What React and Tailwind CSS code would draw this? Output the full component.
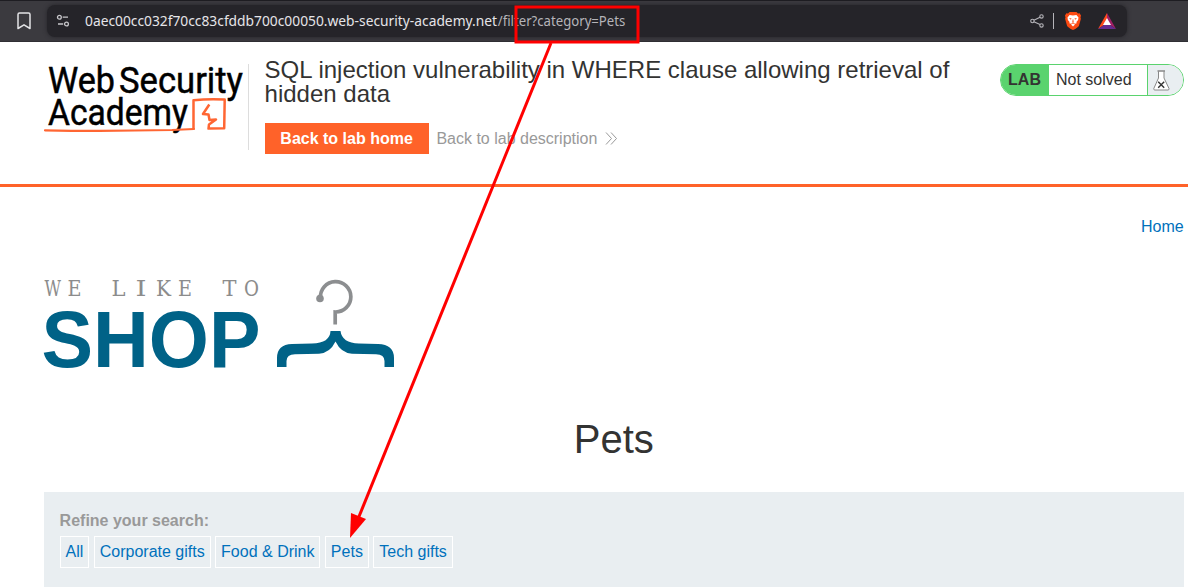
import React from "react";

const categories = ["All", "Corporate gifts", "Food & Drink", "Pets", "Tech gifts"];

const tagline = [
  ["W", 0.5, 16.5],
  ["E", 23.5, 14],
  ["L", 67.5, 14],
  ["I", 91.5, 11],
  ["K", 112, 15],
  ["E", 134, 14],
  ["T", 178.5, 14],
  ["O", 200, 15],
];

function BrowserBar() {
  return (
    <div className="flex h-[42px] items-start border-t border-[#1e1d22] bg-[#3b3a3f] pt-[4px] shadow-[inset_0_-1px_0_#302f34]">
      <svg className="mt-[7px] ml-[17px] h-[18px] w-[14px]" viewBox="0 0 14 18" fill="none" stroke="#e3e3e6" strokeWidth="1.5" strokeLinejoin="round">
        <path d="M1 2.5Q1 1 2.5 1h9Q13 1 13 2.5V16.5L7 12.8 1 16.5Z" />
      </svg>
      <div className="ml-[16px] flex h-[32px] w-[1080px] items-center rounded-[8px] bg-[#252429] shadow-[0_0_4px_#252429]">
        <svg className="ml-[9px] h-[14px] w-[14px]" viewBox="0 0 14 14" fill="none" stroke="#c7c6ca" strokeWidth="1.3">
          <circle cx="3.4" cy="3.2" r="1.9" />
          <path d="M6.7 3.2H12M2 10h5.2" />
          <circle cx="10.5" cy="10" r="1.9" />
        </svg>
        <svg className="ml-[15px] h-[24px] w-[545px]" viewBox="0 0 545 24" fontFamily="'Noto Sans', sans-serif" fontSize="14.3">
          <text x="0" y="17" textLength="412" lengthAdjust="spacingAndGlyphs" fill="#e5e4e8">0aec00cc032f70cc83cfddb700c00050.web-security-academy.net</text>
          <text x="412.8" y="17" textLength="127.5" lengthAdjust="spacingAndGlyphs" fill="#b5b4b9">/filter?category=Pets</text>
        </svg>
        <svg className="ml-auto h-[14px] w-[14px]" viewBox="0 0 14 14" fill="none" stroke="#b5b4b9" strokeWidth="1.1">
          <circle cx="2.4" cy="7" r="1.7" />
          <circle cx="11.5" cy="2.4" r="1.7" />
          <circle cx="11.5" cy="11.4" r="1.7" />
          <path d="M3.9 6.2 10 3.2M3.9 7.8 10 10.6" />
        </svg>
        <div className="ml-[9px] h-[16px] w-px bg-[#b5b4b9]" />
        <svg className="ml-[11px] h-[18px] w-[16px]" viewBox="0 0 16 18">
          <path d="M4.5 0h7l1.5 1.5 1.6-.2L16 3.5l-.5 2 .4 1.2-2 7.2Q13 15.5 8 18 3 15.5 2.1 13.9L.1 6.7.5 5.5 0 3.5 1.4 1.3 3 1.5Z" fill="#fb4a12" />
          <path d="M4.6 3 8 3.5l3.4-.5L13.5 5.6l-.4 2.3-1.7 2 .3 1.3-1.7.5L8 10.7l-2 1-1.700-.5.3-1.3-1.7-2-.4-2.3ZM8 11.4l2 1L8 14.5l-2-2.1Z" fill="#fff" />
          <path d="M4 6l2.600.5-.8 1.300ZM12 6l-2.600.5.8 1.300ZM7.500 7.500h1L8.400 9.500l.8.600L8 10.700l-1.200-.6.8-.6Z" fill="#fb4a12" />
        </svg>
        <svg className="mr-[11px] ml-[17px] h-[16px] w-[18px]" viewBox="0 0 18 16">
          <path d="M9 0 0 16 9 10Z" fill="#ff4a1c" />
          <path d="M9 0 18 16 9 10Z" fill="#a11f66" />
          <path d="M0 16h18L9 10Z" fill="#662d91" />
          <path d="M9 5 13 12H5Z" fill="#fff" />
        </svg>
      </div>
    </div>
  );
}

function AcademyLogo() {
  return (
    <svg className="h-[86px] w-[204px] shrink-0 overflow-visible" viewBox="0 0 204 86" fill="none">
      <g fill="#000" stroke="#000" strokeWidth=".5" fontFamily="Roboto, sans-serif" fontSize="37.5">
        <text x="4" y="29" textLength="67" lengthAdjust="spacingAndGlyphs">Web</text>
        <text x="75" y="29" textLength="124" lengthAdjust="spacingAndGlyphs">Security</text>
        <text x="4" y="61" textLength="140" lengthAdjust="spacingAndGlyphs">Academy</text>
      </g>
      <path d="M1 66.300Q60 67.500 128 66L150 65" stroke="#ff6633" strokeWidth="2.200" strokeLinecap="round" />
      <path d="M149.500 65V36.200Q165 34.500 180.700 35.500L180.200 64.200 164.500 64.600 165 60.500 172 55.500 165.500 56 164.500 50.500 159 50 165.300 40.500" stroke="#ff6633" strokeWidth="2.500" strokeLinejoin="round" />
    </svg>
  );
}

function LabStatus() {
  return (
    <div className="mt-[6px] flex h-[32px] w-[184px] overflow-hidden rounded-full border border-[#5ad36e] bg-white">
      <div className="flex w-[48px] items-center justify-center bg-[#5ad36e] pr-px font-bold text-[#333332]">LAB</div>
      <div className="w-[99px] border-r border-[#5ad36e] pl-[7px] leading-[30px] text-[#333332]">Not solved</div>
      <div className="flex flex-1 items-center bg-[#e9eef1] pl-[5px]">
        <svg className="h-[21px] w-[17px]" viewBox="0 0 17 21" fill="none">
          <path d="M5.500 1.200V8L.8 18.500Q.6 20 1.800 20H15Q16.300 20 16 18.500L11 8V1.200" fill="#fff" stroke="#888" />
          <path d="M4.500 1h7.500" stroke="#888" strokeWidth="1.300" />
          <path d="m5.200 11.800 6 6m0-6-6 6" stroke="#333332" strokeWidth="1.400" />
        </svg>
      </div>
    </div>
  );
}

function ShopLogo() {
  return (
    <svg className="ml-[44px] block h-[100px] w-[360px] overflow-visible" viewBox="0 0 360 100">
      <g fontFamily="'DejaVu Serif', serif" fontSize="21.500" fill="#8c8c8c">
        {tagline.map(([letter, x, width]) => (
          <text key={x} x={x} y="20" textLength={width} lengthAdjust="spacingAndGlyphs">{letter}</text>
        ))}
      </g>
      <text x="-2.500" y="90.500" textLength="219" lengthAdjust="spacingAndGlyphs" fontFamily="'Liberation Sans', sans-serif" fontSize="80" fontWeight="700" fill="#006287">SHOP</text>
      <circle cx="276" cy="22.500" r="3.800" fill="#8c8e90" />
      <path d="M276.500 22A15.200 15.200 0 1 1 291.200 36V48.500" fill="none" stroke="#8c8e90" strokeWidth="3.700" />
      <path d="M233 91V82Q233 68.500 248 68L268 67.500Q286 67 286.500 55H296.500Q298 67 315 67.500L334 68Q350 68.500 350 82V91H340.500V85Q340.500 78.500 332 78.200L308 77.700Q297 77 291.500 65.500 286 77 275 77.700L251 78.200Q242.500 78.500 242.500 85V91Z" fill="#006287" />
    </svg>
  );
}

export default function App() {
  return (
    <div className="relative h-[588px] w-[1188px] overflow-hidden bg-white font-['Liberation_Sans',Arial,sans-serif] text-base text-[#333332]">
      <BrowserBar />
      <header className="flex h-[145px] items-start border-b-[3px] border-[#ff6229] pt-[16px] pr-[4px] pl-[44px]">
        <div className="mt-[6px] flex h-[86px] border-r border-[#dddddd]">
          <AcademyLogo />
        </div>
        <div className="ml-[15.6px] w-[720px]">
          <h1 className="text-2xl leading-6">SQL injection vulnerability in WHERE clause allowing retrieval of hidden data</h1>
          <div className="mt-[17px] flex items-center">
            <a className="flex h-[31px] w-[164px] items-center justify-center bg-[#ff6229] font-bold text-white">Back to lab home</a>
            <a className="ml-[7.8px] flex items-center text-[#999999]">
              Back to lab description
              <svg className="ml-[8px] h-[13px] w-[13px]" viewBox="0 0 13 13" fill="none" stroke="#999999" strokeWidth="1">
                <path d="m1 .5 5.500 6L1 12.500M6 .5l5.500 6L6 12.500" />
              </svg>
            </a>
          </div>
        </div>
        <div className="ml-auto">
          <LabStatus />
        </div>
      </header>
      <main>
        <nav className="flex h-[89px] justify-end pt-[28px] pr-[4.4px] text-[#0071bc]">
          <a>Home</a>
        </nav>
        <ShopLogo />
        <h2 className="mt-[40px] ml-[43.8px] h-[76px] w-[1140px] text-center text-[40px] leading-[46px]">Pets</h2>
        <section className="ml-[44px] h-[95px] w-[1140px] bg-[#e9eef1] pt-[17px] pl-[15.6px]">
          <div className="h-[27px] font-bold text-[#999999]">Refine your search:</div>
          <div className="flex gap-[4.4px] text-[#0071bc]">
            {categories.map((category) => (
              <a key={category} className="h-[32px] border border-white px-[5px] leading-[30px]">{category}</a>
            ))}
          </div>
        </section>
      </main>
      <svg className="pointer-events-none absolute top-0 left-0 h-[588px] w-[1188px]" viewBox="0 0 1188 588" fill="none" stroke="#ff0000" strokeWidth="3">
        <path d="M516 7H638V42H516Z" />
        <path d="M551 43 358 519" />
        <path d="M350 538 351 513 366 519Z" fill="#ff0000" stroke="none" />
      </svg>
    </div>
  );
}
